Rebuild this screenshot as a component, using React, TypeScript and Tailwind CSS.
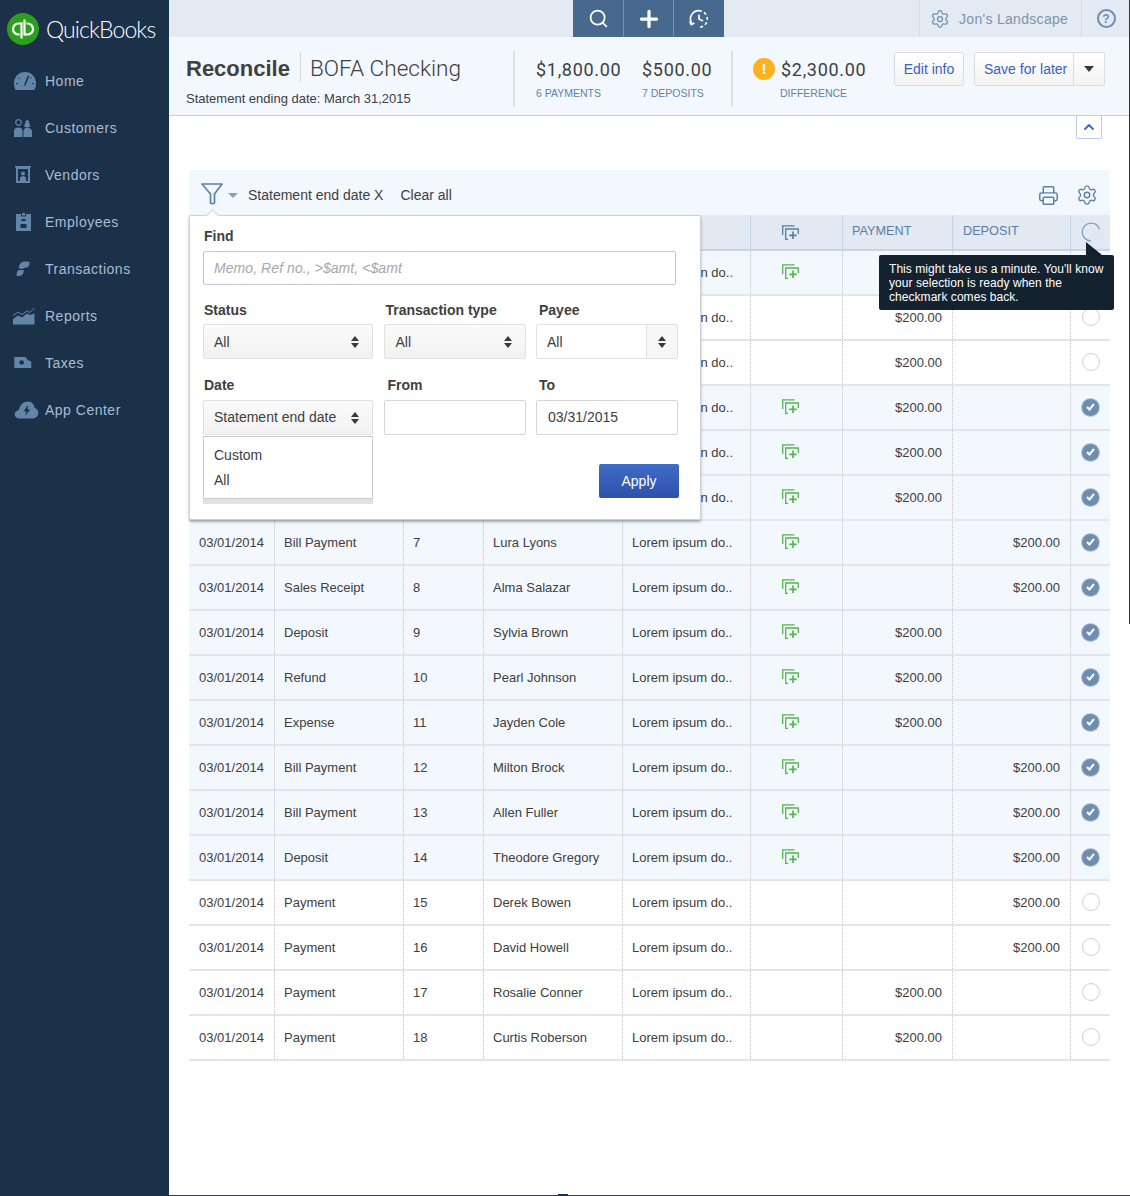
import { ChevronUp, Plus, Printer, Search, Settings } from "lucide-react";

const sans = "font-['Liberation_Sans',Arial,sans-serif]";

const Home = () => (
  <svg width="22" height="18" viewBox="0 0 22 18" fill="#6386a8">
    <path d="M11 0C4.900 0 0 4.900 0 11c0 2.700.6 5.200 1.600 7h18.800c1-1.800 1.600-4.300 1.600-7C22 4.900 17.100 0 11 0z" />
    <path d="M13.800 3.500L10 13.500h1.500l3.800-9.500z" fill="#1b3049" />
    <path d="M2 11.500h2M18 11.500h2M4.500 5.500l1.300 1.300M17.500 5.500l-1.300 1.300" stroke="#1b3049" />
  </svg>
);
const Customers = () => (
  <svg width="18" height="18" viewBox="0 0 18 18" fill="#6386a8">
    <circle cx="4.500" cy="3.500" r="2.800" fill="none" stroke="#6386a8" strokeWidth="1.200" />
    <path d="M0 18v-6c0-2 1.500-3.500 4.500-3.500S8.500 10 8.500 12v6zM9.500 18v-6c0-2 1.500-3 3.700-3.500 2.300.5 4.800 1.500 4.800 3.500v6z" />
    <path d="M10 7.500c1-1 .8-6.500 3.200-6.500s2.300 5.500 3.300 6.500c-1 1-5.500 1-6.500 0z" />
  </svg>
);
const Vendors = () => (
  <svg width="16" height="18" viewBox="0 0 16 18" fill="#6386a8">
    <path d="M0 0h16v1.500h-1V17H1V1.500H0zM3 3v12h10V3z" fillRule="evenodd" />
    <circle cx="8" cy="7.500" r="2" />
    <path d="M5 15v-3c0-1 1.500-2 3-2s3 1 3 2v3z" />
  </svg>
);
const Employees = () => (
  <svg width="15" height="18" viewBox="0 0 15 18" fill="#6386a8">
    <path d="M0 1h5v2.500h5V1h5v17H0zM5.500 6v2h4V6zM4.500 11v4h6v-4z" fillRule="evenodd" />
    <path d="M6 0h3v2.500H6z" />
  </svg>
);
const Transactions = () => (
  <svg width="14" height="18" viewBox="0 0 16 18" fill="#6386a8">
    <path d="M6 1.500c1.500-1.500 9-1.500 9.500-.5.300 1-.5 5-2 6-1.500.5-5 .5-6 2L3 8c.5-3 1.500-5.500 3-6.500z" />
    <path d="M2.500 10.500c2-.5 3.500 0 5 0 1-.5 1.500-.5 1.500.5-.5 2.500-1 4.500-3 5.500-1.500.5-4.500 1-5 .5-.8-1 0-5.500 1.500-6.500z" />
  </svg>
);
const Reports = () => (
  <svg width="22" height="18" viewBox="0 0 22 18" fill="#6386a8">
    <path d="M0 12l5-3.500 4 2 5-4 3 1.500 4.500-1.500V17.500H0z" />
    <path d="M0 8.500L5 5l4 2.500 5-3.500 3 1.500L21.500 1" fill="none" stroke="#6386a8" />
  </svg>
);
const Taxes = () => (
  <svg width="18" height="11" viewBox="0 0 19 12" fill="#6386a8">
    <path d="M0 0h12l3 3.500 3.500 1.500V12H0z" />
    <circle cx="8" cy="6" r="2.500" fill="#1b3049" />
  </svg>
);
const AppCenter = () => (
  <svg width="25" height="18" viewBox="0 0 26 19" fill="#6386a8">
    <path d="M6 18.500C2.500 18.500.5 16.500.5 14c0-2.500 2-4 4.500-4.500C6 4 10 .5 14.500.5c4 0 6.500 3 7 6.500 2.500 1 4 3 4 5.500 0 3.500-2.500 6-6 6z" />
    <path d="M14.500 4L10 11h3l-1.500 4.500L17 9h-3z" fill="#1b3049" />
  </svg>
);

const nav = [
  { label: "Home", icon: <Home />, pad: "pl-[14px]" },
  { label: "Customers", icon: <Customers />, pad: "pl-[14px]" },
  { label: "Vendors", icon: <Vendors />, pad: "pl-[15px]" },
  { label: "Employees", icon: <Employees />, pad: "pl-[16px]" },
  { label: "Transactions", icon: <Transactions />, pad: "pl-[16px]" },
  { label: "Reports", icon: <Reports />, pad: "pl-[13px]" },
  { label: "Taxes", icon: <Taxes />, pad: "pl-[14px]" },
  { label: "App Center", icon: <AppCenter />, pad: "pl-[14px]" },
];

const Logo = () => (
  <svg width="32" height="32" viewBox="0 0 32 32">
    <circle cx="16" cy="16" r="16" fill="#2ca01c" />
    <path d="M14.500 9.500v16M17.500 22.500v-16" stroke="#fff" strokeWidth="2.200" fill="none" />
    <path d="M14.500 10.500H11.500a5.500 5.500 0 0 0 0 11h1M17.500 21.500h3a5.500 5.500 0 0 0 0-11h-1" stroke="#fff" strokeWidth="2.200" fill="none" />
  </svg>
);

const Funnel = () => (
  <svg width="22" height="22" viewBox="0 0 22 22" fill="none" stroke="#5b82a8" strokeWidth="1.700" strokeLinejoin="round">
    <path d="M1 1h20l-7.500 10v8.500c0 1.500-4 1.500-4 0V11z" />
  </svg>
);

const History = () => (
  <svg width="20" height="20" viewBox="0 0 20 20" fill="none" stroke="#fff" strokeWidth="1.700">
    <path d="M2.500 14A8.300 8.300 0 0 1 10 1.700a8.300 8.300 0 0 1 8.300 8.300 8.300 8.300 0 0 1-8.300 8.300" strokeDasharray="20 2.500 3 2.500 3 2.500 3 2.500 3 2.500" />
    <path d="M10 5.500V10l4 2" />
    <path d="M.8 12.500l1.600 3 3-1.500" />
  </svg>
);

const AddCopy = ({ color }: { color: string }) => (
  <svg width="17" height="15" viewBox="0 0 17 15" fill="none" stroke={color} strokeWidth="1.300">
    <path d="M.7 10V.8h11.800" />
    <path d="M6 14.300H3.700V4h12.600v5" />
    <path d="M11 6.500v7.500M7.300 10.300h7.400" strokeWidth="1.700" />
  </svg>
);

const UpDown = () => (
  <svg width="8" height="12" viewBox="0 0 8 12" fill="#393a3d">
    <path d="M4 0l4 5H0zM4 12L0 7h8z" />
  </svg>
);

const Spinner = () => (
  <svg width="20" height="20" viewBox="0 0 20 20" fill="none" strokeWidth="1.300">
    <circle cx="10" cy="10" r="8.800" stroke="#dfe6ef" />
    <path d="M10 18.800A8.800 8.800 0 0 1 1.200 10 8.800 8.800 0 0 1 10 1.200a8.800 8.800 0 0 1 8.400 6" stroke="#7f9fc4" />
  </svg>
);

const Check = () => (
  <span className="flex h-[17px] w-[17px] items-center justify-center rounded-full bg-[#6d8eb0] ring-1 ring-[#b9c5d2]">
    <svg width="9" height="8" viewBox="0 0 9 8" fill="none" stroke="#fff" strokeWidth="2">
      <path d="M1 4l2.500 2.500L8 1" />
    </svg>
  </span>
);

type Row = { id: number; date?: string; type?: string; ref?: string; payee?: string; covered?: boolean; pay?: boolean; dep?: boolean; add?: boolean; checked?: boolean };

const rows: Row[] = [
  { id: 1, covered: true, add: true, checked: true },
  { id: 2, covered: true, pay: true },
  { id: 3, covered: true, pay: true },
  { id: 4, covered: true, add: true, pay: true, checked: true },
  { id: 5, covered: true, add: true, pay: true, checked: true },
  { id: 6, covered: true, add: true, pay: true, checked: true },
  { id: 7, date: "03/01/2014", type: "Bill Payment", ref: "7", payee: "Lura Lyons", add: true, dep: true, checked: true },
  { id: 8, date: "03/01/2014", type: "Sales Receipt", ref: "8", payee: "Alma Salazar", add: true, dep: true, checked: true },
  { id: 9, date: "03/01/2014", type: "Deposit", ref: "9", payee: "Sylvia Brown", add: true, pay: true, checked: true },
  { id: 10, date: "03/01/2014", type: "Refund", ref: "10", payee: "Pearl Johnson", add: true, pay: true, checked: true },
  { id: 11, date: "03/01/2014", type: "Expense", ref: "11", payee: "Jayden Cole", add: true, pay: true, checked: true },
  { id: 12, date: "03/01/2014", type: "Bill Payment", ref: "12", payee: "Milton Brock", add: true, dep: true, checked: true },
  { id: 13, date: "03/01/2014", type: "Bill Payment", ref: "13", payee: "Allen Fuller", add: true, dep: true, checked: true },
  { id: 14, date: "03/01/2014", type: "Deposit", ref: "14", payee: "Theodore Gregory", add: true, dep: true, checked: true },
  { id: 15, date: "03/01/2014", type: "Payment", ref: "15", payee: "Derek Bowen", dep: true },
  { id: 16, date: "03/01/2014", type: "Payment", ref: "16", payee: "David Howell", dep: true },
  { id: 17, date: "03/01/2014", type: "Payment", ref: "17", payee: "Rosalie Conner", pay: true },
  { id: 18, date: "03/01/2014", type: "Payment", ref: "18", payee: "Curtis Roberson", pay: true },
];

const cols = "grid grid-cols-[85px_129px_80px_139px_128px_92px_110px_118px_40px]";
const cell = "flex items-center border-l border-dotted border-[#c2c2c2] pl-[9px]";
const amount = "flex items-center justify-end border-l border-dotted border-[#c2c2c2] pr-[10px]";
const clipped = "flex items-center justify-end border-l border-dotted border-[#c2c2c2] pr-[17px]";

const Select = ({ value, className }: { value: string; className: string }) => (
  <div className={`flex h-[35px] items-center justify-between rounded-[2px] border border-[#e0e1e3] bg-gradient-to-b from-[#fbfbfb] to-[#f1f1f1] pl-[10px] pr-[13px] text-[14px] text-[#404040] ${className}`}>
    {value}
    <UpDown />
  </div>
);

const label = "block text-[14px] font-bold leading-[20px] text-[#404040]";

const FilterPopover = () => (
  <div className="absolute left-0 top-[45px] z-10 h-[305px] w-[512px] rounded-[2px] border border-[#cfd2d5] bg-white pl-[13px] pr-[22px] pt-[10px] shadow-[0_2px_3px_rgba(0,0,0,0.3)]">
    <div className="absolute -top-[5px] left-[18px] h-[9px] w-[9px] rotate-45 border-l border-t border-[#cfd2d5] bg-white" />
    <span className={`${label} mb-[5px] pl-[1px]`}>Find</span>
    <div className="mr-[2px] flex h-[34px] items-center rounded-[2px] border border-[#c4c6c9] pl-[10px] text-[14px] italic tracking-[0.07px] text-[#a5a7aa]">
      Memo, Ref no., &gt;$amt, &lt;$amt
    </div>
    <div className="mt-[15px] flex">
      <div className="w-[182px]">
        <span className={`${label} mb-[4px] pl-[1px]`}>Status</span>
        <Select value="All" className="w-[170px] pt-[1px]" />
      </div>
      <div className="w-[152px]">
        <span className={`${label} mb-[4px] pl-[1px]`}>Transaction type</span>
        <Select value="All" className="w-[142px] pt-[1px]" />
      </div>
      <div className="w-[142px]">
        <span className={`${label} mb-[4px] pl-[3px]`}>Payee</span>
        <div className="flex h-[35px] w-[142px] items-center rounded-[2px] border border-[#e0e1e3] bg-white pl-[10px] text-[14px] text-[#404040]">
          <span className="flex-1 pt-[2px]">All</span>
          <span className="flex h-full w-[31px] items-center justify-center border-l border-[#e0e1e3] bg-[#f7f7f7]">
            <UpDown />
          </span>
        </div>
      </div>
    </div>
    <div className="mt-[16px] flex">
      <div className="relative w-[182px]">
        <span className={`${label} mb-[5px] pl-[1px]`}>Date</span>
        <Select value="Statement end date" className="w-[170px]" />
        <div className="absolute left-0 top-[61px] z-10 h-[63px] w-[170px] rounded-[1px] border border-[#c8cacc] bg-white pl-[10px] pt-[6px] text-[14px] leading-[25px] text-[#404040] shadow-[0_5px_0_#e2e2e2]">
          <div>Custom</div>
          <div>All</div>
        </div>
      </div>
      <div className="w-[152px]">
        <span className={`${label} mb-[5px] pl-[3px]`}>From</span>
        <div className="h-[35px] w-[142px] rounded-[2px] border border-[#d4d6d8] bg-white" />
      </div>
      <div className="w-[142px]">
        <span className={`${label} mb-[5px] pl-[3px]`}>To</span>
        <div className="flex h-[35px] w-[142px] items-center rounded-[2px] border border-[#d4d6d8] bg-white pl-[11px] text-[14px] text-[#404040]">
          03/31/2015
        </div>
      </div>
    </div>
    <div className="absolute left-[409px] top-[248px] flex h-[34px] w-[80px] items-center justify-center rounded-[2px] bg-gradient-to-b from-[#3f6cc4] to-[#2f50ad] text-[14px] text-white">
      Apply
    </div>
  </div>
);

export default function App() {
  return (
    <div className={`flex h-[1196px] w-[1130px] overflow-hidden bg-white ${sans}`}>
      <aside className="w-[169px] shrink-0 bg-[#1b3049]">
        <div className="flex h-[58px] items-center pl-[7px]">
          <Logo />
          <span className="ml-[7px] font-['Lato',sans-serif] text-[23px] font-light tracking-[-0.9px] text-white">QuickBooks</span>
        </div>
        <nav className="text-[14px] tracking-[0.5px] text-[#a9bdd2]">
          {nav.map((item) => (
            <div key={item.label} className="flex h-[47px] items-center">
              <span className={`-mt-[2px] flex w-[45px] shrink-0 ${item.pad}`}>{item.icon}</span>
              {item.label}
            </div>
          ))}
        </nav>
      </aside>

      <div className="relative min-w-0 flex-1 border-b border-[#3a3f45]">
        <span className="absolute right-0 top-0 z-20 h-[624px] w-px bg-[#333333]" />
        <span className="absolute -bottom-px left-[389px] h-[2px] w-[10px] bg-[#1b3049]" />
        <div className="flex h-[37px] items-stretch bg-[#e3eaf3]">
          <div className="ml-[404px] flex">
            <span className="flex w-[50px] items-center justify-center bg-[#47698e]"><Search size={21} color="#fff" strokeWidth={2} /></span>
            <span className="flex w-[50px] items-center justify-center border-l border-[#7a93ae] bg-[#47698e]"><Plus size={26} color="#fff" strokeWidth={3} /></span>
            <span className="flex w-[51px] items-center justify-center border-l border-[#7a93ae] bg-[#47698e]"><History /></span>
          </div>
          <div className="ml-[195px] flex w-[162px] items-center border-l border-[#d3dce7] pl-[10px] text-[14px] tracking-[0.3px] text-[#7d93ab]">
            <Settings size={20} color="#6d8eb0" strokeWidth={1.500} />
            <span className="ml-[9px] pt-[2px]">Jon's Landscape</span>
          </div>
          <div className="flex flex-1 items-center justify-center border-l border-[#d3dce7]">
            <span className="flex h-[19px] w-[19px] items-center justify-center rounded-full border-2 border-[#6d8eb0] text-[12px] font-bold text-[#6d8eb0]">?</span>
          </div>
        </div>

        <header className="flex h-[79px] items-start border-b border-[#bcd0e3] bg-[#f3f7fe]">
          <div className="ml-[17px] w-[327px] pt-[18px]">
            <div className="flex h-[28px] items-center">
              <h1 className="text-[22px] font-bold leading-[28px] text-[#404040]">Reconcile</h1>
              <span className="-mt-[4px] ml-[10px] h-[30px] w-px bg-[#d4d7da]" />
              <span className="ml-[9px] font-['Roboto',sans-serif] text-[22.600px] font-light text-[#404040]">BOFA Checking</span>
            </div>
            <p className="mt-[8px] text-[13px] leading-[16px] text-[#404040]">Statement ending date: March 31,2015</p>
          </div>
          <div className="mt-[14px] h-[56px] w-[2px] bg-[#dcdfe3]" />
          <div className="ml-[21px] w-[106px] pt-[21px]">
            <div className="font-['Roboto',sans-serif] text-[18px] leading-[24px] tracking-[0.7px] text-[#404040]">$1,800.00</div>
            <div className="mt-[4px] text-[10.500px] leading-[14px] text-[#5f83a6]">6 PAYMENTS</div>
          </div>
          <div className="w-[89px] pt-[21px]">
            <div className="font-['Roboto',sans-serif] text-[18px] leading-[24px] tracking-[0.7px] text-[#404040]">$500.00</div>
            <div className="mt-[4px] text-[10.500px] leading-[14px] text-[#5f83a6]">7 DEPOSITS</div>
          </div>
          <div className="mt-[14px] h-[55px] w-[2px] bg-[#dcdfe3]" />
          <div className="ml-[20px] mt-[21px] flex h-[22px] w-[22px] items-center justify-center rounded-full bg-[#fdb11c] text-[15px] font-bold text-white">!</div>
          <div className="ml-[6px] w-[113px] pt-[21px]">
            <div className="font-['Roboto',sans-serif] text-[18px] leading-[24px] tracking-[0.7px] text-[#404040]">$2,300.00</div>
            <div className="-ml-[1px] mt-[4px] text-[10.500px] leading-[14px] text-[#5f83a6]">DIFFERENCE</div>
          </div>
          <div className="mt-[15px] flex h-[34px] w-[70px] items-center justify-center rounded-[2px] border border-[#dcdde0] bg-gradient-to-b from-white to-[#f3f3f3] text-[14px] text-[#3b5fc2]">Edit info</div>
          <div className="ml-[10px] mt-[15px] flex h-[34px] w-[131px] rounded-[2px] border border-[#dcdde0] bg-gradient-to-b from-white to-[#f3f3f3] text-[14px] text-[#3b5fc2]">
            <span className="flex flex-1 items-center pl-[9px]">Save for later</span>
            <span className="flex w-[31px] items-center justify-center border-l border-[#dcdde0]">
              <span className="h-0 w-0 border-x-[5px] border-t-[6px] border-x-transparent border-t-[#393a3d]" />
            </span>
          </div>
        </header>

        <div className="ml-[907px] flex h-[23px] w-[26px] items-center justify-center rounded-b-[2px] border-x border-b border-[#b9cde4] text-[#3b6fc2]">
          <ChevronUp size={16} strokeWidth={3} />
        </div>

        <main className="relative ml-[20px] mt-[31px] w-[921px]">
          <div className="flex h-[45px] items-center bg-[#f3f7fe] px-[12px] pt-[5px] text-[14px] text-[#404040]">
            <span className="-mt-[2px]"><Funnel /></span>
            <span className="ml-[5px] h-0 w-0 border-x-[5px] border-t-[5px] border-x-transparent border-t-[#7ea0c2]" />
            <span className="ml-[10px]">Statement end date X</span>
            <span className="ml-[17px]">Clear all</span>
            <span className="ml-auto"><Printer size={21} color="#5b82a8" strokeWidth={1.700} /></span>
            <span className="ml-[17px]"><Settings size={22} color="#5b82a8" strokeWidth={1.500} /></span>
          </div>

          <div className={`${cols} h-[36px] border-b-2 border-[#c3d5ea] bg-[#e2e9f3] text-[12.700px] text-[#5b7ea3]`}>
            <div className="col-span-5" />
            <div className="flex items-center justify-center border-l border-[#c3d5ea] pr-[12px]"><AddCopy color="#5b7ea3" /></div>
            <div className="flex items-center border-l border-[#c3d5ea] pl-[9px]">PAYMENT</div>
            <div className="flex items-center border-l border-[#c3d5ea] pl-[10px]">DEPOSIT</div>
            <div className="flex items-center justify-center border-l border-[#c3d5ea]"><Spinner /></div>
          </div>

          {rows.map((r) => (
            <div key={r.id} className={`${cols} h-[45px] border-b-2 border-[#e3e5e8] text-[13px] text-[#404040] ${r.checked ? "bg-[#f3f7fe]" : "bg-white"}`}>
              <div className="flex items-center pl-[10px]">{r.date}</div>
              <div className={cell}>{r.type}</div>
              <div className={cell}>{r.ref}</div>
              <div className={cell}>{r.payee}</div>
              <div className={r.covered ? clipped : cell}>{r.covered ? "n do.." : "Lorem ipsum do.."}</div>
              <div className="flex items-center justify-center border-l border-dotted border-[#c2c2c2] pb-[3px] pr-[12px]">
                {r.add && <AddCopy color="#52b84a" />}
              </div>
              <div className={amount}>{r.pay && "$200.00"}</div>
              <div className={amount}>{r.dep && "$200.00"}</div>
              <div className="flex items-center justify-center border-l border-dotted border-[#c2c2c2] pb-[1px]">
                {r.checked ? <Check /> : <span className="h-[18px] w-[18px] rounded-full border border-[#cfd1d4] bg-white" />}
              </div>
            </div>
          ))}

          <FilterPopover />

          <div className="absolute left-[690px] top-[85px] z-10 h-[55px] w-[235px] rounded-[2px] bg-[#14222f] pl-[10px] pr-[8px] pt-[7px] text-[12px] leading-[14px] tracking-[0.05px] text-white">
            <span className="absolute -top-[13px] left-[207px] h-0 w-0 border-b-[13px] border-r-[16px] border-b-[#14222f] border-r-transparent" />
            This might take us a minute. You'll know your selection is ready when the checkmark comes back.
          </div>
        </main>
      </div>
    </div>
  );
}
